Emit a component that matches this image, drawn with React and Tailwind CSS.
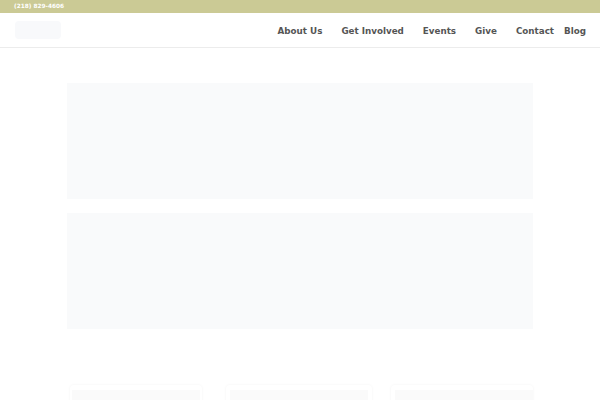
import React from "react";

const links = ["About Us", "Get Involved", "Events", "Give", "Contact"];

const App = () => {
  return (
    <div className="w-[600px] h-[400px] overflow-hidden bg-white" style={{ fontFamily: "'DejaVu Sans', sans-serif" }}>
      <div className="h-[13px] bg-[#cbca95] flex items-center pl-[14px] pt-px">
        <span className="text-[5.8px] font-bold text-white leading-none">(218) 829-4606</span>
      </div>

      <header className="h-[35px] border-b border-[#ececec] flex items-center justify-between pl-[15px] pr-[14px]">
        <div className="w-[46px] h-[18px] bg-[#f8f9fb] rounded-sm" />
        <nav className="flex items-center pt-[3px] text-[8.75px] font-bold text-[#555]">
          {links.map((l) => (
            <a key={l} className="mr-[19px]">{l}</a>
          ))}
          <a className="-ml-[9px]">Blog</a>
        </nav>
      </header>

      <main className="w-[466px] mx-auto pt-[35px]">
        <div className="h-[116px] bg-[#f9fafb]" />
        <div className="h-[116px] bg-[#f9fafb] mt-[14px]" />

        <div className="flex mt-[56px]">
          <div className="ml-[3px] w-[132px] px-[2px] pt-[5px] rounded shadow-[0_0_3px_rgba(0,0,0,0.05)]">
            <div className="h-[20px] bg-[#fafafa]" />
          </div>
          <div className="ml-[24px] w-[146px] px-[4px] pt-[5px] rounded shadow-[0_0_3px_rgba(0,0,0,0.05)]">
            <div className="h-[20px] bg-[#fafafa]" />
          </div>
          <div className="ml-[19px] w-[142px] pl-[4px] pt-[5px] rounded shadow-[0_0_3px_rgba(0,0,0,0.05)]">
            <div className="h-[20px] bg-[#fafafa]" />
          </div>
        </div>
      </main>
    </div>
  );
};

export default App;
